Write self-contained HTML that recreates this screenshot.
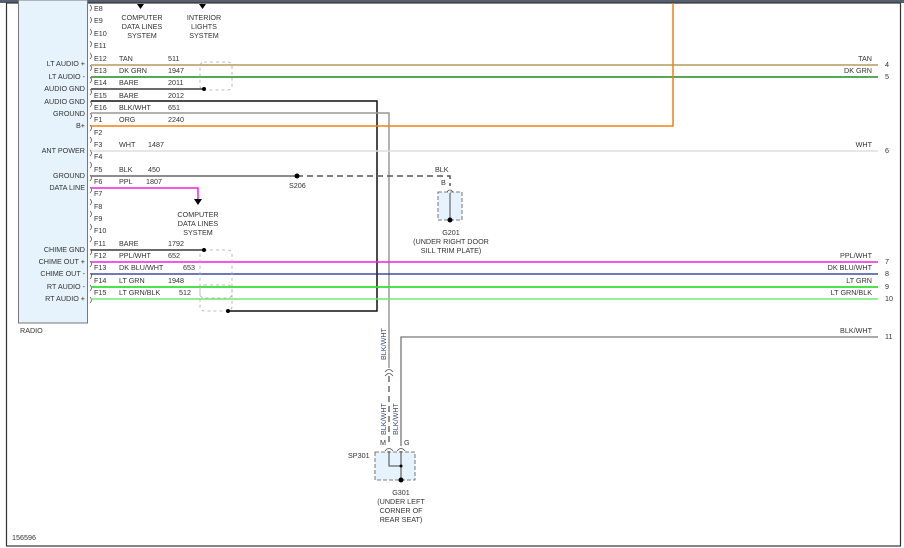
<!DOCTYPE html>
<html><head><meta charset="utf-8"><style>
html,body{margin:0;padding:0;background:#fff;width:904px;height:548px;overflow:hidden}
svg{display:block}
text{font-family:"Liberation Sans",sans-serif;font-size:7.2px;fill:#333}
.b{fill:#3a4a80}
</style></head><body>
<svg width="904" height="548" viewBox="0 0 904 548">
<rect x="0" y="0" width="904" height="3" fill="#55606e"/>
<rect x="6.5" y="3" width="894" height="543" fill="#fff" stroke="#333" stroke-width="1.2"/>
<!-- radio box -->
<rect x="18.5" y="0" width="69" height="323" fill="#e6f3fc" stroke="#777" stroke-width="1"/>
<text x="20" y="333">RADIO</text>
<!-- connector marks -->
<g fill="none" stroke="#555" stroke-width="0.8">
<path d="M90,5 q3,3 0,6 M90,17 q3,3 0,6 M90,29 q3,3 0,6 M90,41 q3,3 0,6 M90,53 q3,3 0,6 M90,65 q3,3 0,6 M90,77 q3,3 0,6 M90,89 q3,3 0,6 M90,101 q3,3 0,6 M90,113 q3,3 0,6 M90,125 q3,3 0,6 M90,137 q3,3 0,6 M90,150 q3,3 0,6 M90,162 q3,3 0,6 M90,175 q3,3 0,6 M90,187 q3,3 0,6 M90,199 q3,3 0,6 M90,211 q3,3 0,6 M90,224 q3,3 0,6 M90,236 q3,3 0,6 M90,249 q3,3 0,6 M90,261 q3,3 0,6 M90,273 q3,3 0,6 M90,285 q3,3 0,6 M90,297 q3,3 0,6"/>
</g>
<!-- pin labels -->
<g>
<text x="94" y="11">E8</text><text x="94" y="23">E9</text><text x="94" y="36">E10</text><text x="94" y="48">E11</text>
<text x="94" y="61">E12</text><text x="94" y="73">E13</text><text x="94" y="85">E14</text><text x="94" y="98">E15</text>
<text x="94" y="110">E16</text><text x="94" y="122">F1</text><text x="94" y="135">F2</text><text x="94" y="147">F3</text>
<text x="94" y="159">F4</text><text x="94" y="172">F5</text><text x="94" y="184">F6</text><text x="94" y="196">F7</text>
<text x="94" y="209">F8</text><text x="94" y="221">F9</text><text x="94" y="233">F10</text><text x="94" y="246">F11</text>
<text x="94" y="258">F12</text><text x="94" y="270">F13</text><text x="94" y="283">F14</text><text x="94" y="295">F15</text>
</g>
<g text-anchor="end">
<text x="85" y="66">LT AUDIO +</text><text x="85" y="79">LT AUDIO -</text><text x="85" y="91">AUDIO GND</text>
<text x="85" y="104">AUDIO GND</text><text x="85" y="116">GROUND</text><text x="85" y="128">B+</text>
<text x="85" y="153">ANT POWER</text><text x="85" y="178">GROUND</text><text x="85" y="190">DATA LINE</text>
<text x="85" y="252">CHIME GND</text><text x="85" y="264">CHIME OUT +</text><text x="85" y="276">CHIME OUT -</text>
<text x="85" y="289">RT AUDIO -</text><text x="85" y="301">RT AUDIO +</text>
</g>
<!-- wire names and numbers -->
<g>
<text x="119" y="61">TAN</text><text x="168" y="61">511</text>
<text x="119" y="73">DK GRN</text><text x="168" y="73">1947</text>
<text x="119" y="85">BARE</text><text x="168" y="85">2011</text>
<text x="119" y="98">BARE</text><text x="168" y="98">2012</text>
<text x="119" y="110">BLK/WHT</text><text x="168" y="110">651</text>
<text x="119" y="122">ORG</text><text x="168" y="122">2240</text>
<text x="119" y="147">WHT</text><text x="148" y="147">1487</text>
<text x="119" y="172">BLK</text><text x="148" y="172">450</text>
<text x="119" y="184">PPL</text><text x="146" y="184">1807</text>
<text x="119" y="246">BARE</text><text x="168" y="246">1792</text>
<text x="119" y="258">PPL/WHT</text><text x="168" y="258">652</text>
<text x="119" y="270">DK BLU/WHT</text><text x="183" y="270">653</text>
<text x="119" y="283">LT GRN</text><text x="168" y="283">1948</text>
<text x="119" y="295">LT GRN/BLK</text><text x="179" y="295">512</text>
</g>
<!-- top arrows & labels -->
<path d="M137,4 h7 l-3.5,5z M199,4 h7 l-3.5,5z M194,199 h8 l-4,6z" fill="#000"/>
<g text-anchor="middle">
<text x="142" y="20">COMPUTER</text><text x="142" y="29">DATA LINES</text><text x="142" y="38">SYSTEM</text>
<text x="204" y="20">INTERIOR</text><text x="204" y="29">LIGHTS</text><text x="204" y="38">SYSTEM</text>
<text x="198" y="217">COMPUTER</text><text x="198" y="226">DATA LINES</text><text x="198" y="235">SYSTEM</text>
</g>
<!-- wires -->
<g fill="none">
<path d="M91,65 H878" stroke="#b59a5e" stroke-width="1.5"/>
<path d="M91,77 H878" stroke="#1e8a1e" stroke-width="1.5"/>
<path d="M91,89 H204" stroke="#111" stroke-width="1.3"/>
<path d="M91,101 H377 V311 H228" stroke="#111" stroke-width="1.5"/>
<path d="M91,113 H389 V368" stroke="#999" stroke-width="1.5"/>
<path d="M91,126 H673 V3" stroke="#f08010" stroke-width="1.5"/>
<path d="M91,151 H878" stroke="#ddd" stroke-width="1.5"/>
<path d="M91,176 H297" stroke="#666" stroke-width="1.5"/>
<path d="M297,176 H450 V186" stroke="#555" stroke-width="1.5" stroke-dasharray="6,4"/>
<path d="M91,188 H198 V199" stroke="#f020e0" stroke-width="1.5"/>
<path d="M91,250 H204" stroke="#111" stroke-width="1.3"/>
<path d="M91,262 H878" stroke="#f020e0" stroke-width="1.5"/>
<path d="M91,274 H878" stroke="#1a2a8a" stroke-width="1.3"/>
<path d="M91,287 H878" stroke="#30e030" stroke-width="1.8"/>
<path d="M91,299 H878" stroke="#70e870" stroke-width="1.5"/>
<path d="M878,337 H401 V446" stroke="#777" stroke-width="1.3"/>
<path d="M389,376 V446" stroke="#555" stroke-width="1.3" stroke-dasharray="6,4"/>
<!-- shield dashes -->
<g stroke="#aaa" stroke-width="0.8" stroke-dasharray="3,3">
<rect x="200" y="62" width="32" height="28" rx="4"/>
<rect x="200" y="250" width="32" height="48" rx="4"/>
<rect x="200" y="285" width="32" height="26" rx="4"/>
</g>
</g>
<circle cx="204" cy="89" r="2" fill="#000"/>
<circle cx="204" cy="250" r="2" fill="#000"/>
<circle cx="228" cy="311" r="2" fill="#000"/>
<circle cx="297" cy="176" r="2.5" fill="#000"/>
<text x="289" y="188">S206</text>
<!-- connector near 389 -->
<path d="M385,372 q4,-5 8,0 M385,376 q4,-5 8,0" fill="none" stroke="#555" stroke-width="0.8"/>
<!-- G201 -->
<text x="435" y="172">BLK</text><text x="441" y="185">B</text>
<path d="M447,192 q3,-4 6,0" fill="none" stroke="#555" stroke-width="0.8"/>
<rect x="438" y="192" width="24" height="28" fill="#e6f3fc" stroke="#555" stroke-width="0.8" stroke-dasharray="4,2"/>
<path d="M450,193 V220" stroke="#666" stroke-width="1.2"/>
<circle cx="450" cy="220" r="2.5" fill="#000"/>
<g text-anchor="middle"><text x="451" y="235">G201</text><text x="451" y="244">(UNDER RIGHT DOOR</text><text x="451" y="253">SILL TRIM PLATE)</text></g>
<!-- SP301 -->
<text x="0" y="0" class="b" transform="translate(386,360) rotate(-90)">BLK/WHT</text>
<text x="0" y="0" class="b" transform="translate(386,435) rotate(-90)">BLK/WHT</text>
<text x="0" y="0" class="b" transform="translate(398,435) rotate(-90)">BLK/WHT</text>
<text x="380" y="445">M</text><text x="404" y="445">G</text>
<text x="348" y="458">SP301</text>
<rect x="375" y="452" width="40" height="28" fill="#e6f3fc" stroke="#555" stroke-width="0.8" stroke-dasharray="4,2"/>
<path d="M385,451 q4,-5 8,0 M397,451 q4,-5 8,0" fill="none" stroke="#555" stroke-width="0.8"/>
<path d="M389,451 V466 H401 V451 M401,466 V480" fill="none" stroke="#444" stroke-width="1"/>
<circle cx="401" cy="466" r="1.5" fill="#000"/>
<circle cx="401" cy="480" r="2.5" fill="#000"/>
<g text-anchor="middle"><text x="401" y="495">G301</text><text x="401" y="504">(UNDER LEFT</text><text x="401" y="513">CORNER OF</text><text x="401" y="522">REAR SEAT)</text></g>
<!-- right labels -->
<g text-anchor="end">
<text x="872" y="61">TAN</text><text x="872" y="73">DK GRN</text><text x="872" y="147">WHT</text>
<text x="872" y="258">PPL/WHT</text><text x="872" y="270">DK BLU/WHT</text><text x="872" y="283">LT GRN</text>
<text x="872" y="295">LT GRN/BLK</text><text x="872" y="333">BLK/WHT</text>
</g>
<g>
<text x="885" y="67">4</text><text x="885" y="79">5</text><text x="885" y="153">6</text><text x="885" y="264">7</text>
<text x="885" y="276">8</text><text x="885" y="289">9</text><text x="885" y="301">10</text><text x="885" y="339">11</text>
</g>
<text x="12" y="540">156596</text>
</svg>
</body></html>
